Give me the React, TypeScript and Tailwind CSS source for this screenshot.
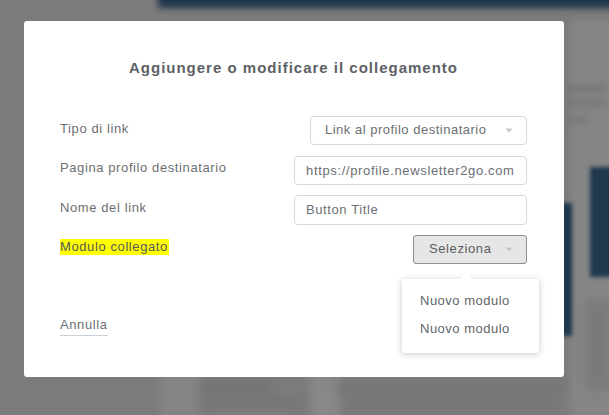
import React from "react";

const font = { fontFamily: '"Liberation Sans", Arial, sans-serif' };

function Caret() {
  return (
    <svg width="8" height="5" viewBox="0 0 8 5" className="shrink-0">
      <path d="M0.5 0.5 L7.5 0.5 L4 4.5 Z" fill="#c3c8cf" />
    </svg>
  );
}

function Background() {
  return (
    <div className="absolute inset-0 overflow-hidden">
      {/* top dark bar */}
      <div className="absolute left-[158px] top-[-10px] w-[470px] h-[18px] bg-[#1e3549] blur-[3px]" />
      {/* right lighter column */}
      <div className="absolute left-[570px] top-[20px] w-[50px] h-[400px] bg-[#858585] blur-[3px]" />
      {/* right dark blocks */}
      <div className="absolute left-[590px] top-[167px] w-[30px] h-[110px] bg-[#1f384c] blur-[2px]" />
      <div className="absolute left-[556px] top-[203px] w-[16px] h-[133px] bg-[#1f384c] blur-[2px]" />
      {/* blurred text on right */}
      <div className="absolute left-[566px] top-[86px] w-[40px] h-[5px] bg-[#727272] blur-[3px]" />
      <div className="absolute left-[566px] top-[100px] w-[40px] h-[5px] bg-[#747474] blur-[3px]" />
      <div className="absolute left-[566px] top-[118px] w-[20px] h-[5px] bg-[#747474] blur-[3px]" />
      <div className="absolute left-[586px] top-[300px] w-[25px] h-[90px] bg-[#7a7a7a] blur-[4px]" />
      {/* bottom area */}
      <div className="absolute left-[160px] top-[370px] w-[40px] h-[50px] bg-[#858585] blur-[4px]" />
      <div className="absolute left-[310px] top-[370px] w-[30px] h-[50px] bg-[#888888] blur-[4px]" />
      <div className="absolute left-[200px] top-[384px] w-[70px] h-[5px] bg-[#6e6e6e] blur-[4px]" />
      <div className="absolute left-[200px] top-[399px] w-[100px] h-[5px] bg-[#707070] blur-[4px]" />
      <div className="absolute left-[335px] top-[386px] w-[225px] h-[5px] bg-[#707070] blur-[4px]" />
      <div className="absolute left-[345px] top-[401px] w-[210px] h-[5px] bg-[#727272] blur-[4px]" />
    </div>
  );
}

export default function App() {
  return (
    <div
      className="relative w-[609px] h-[415px] overflow-hidden bg-[#7b7b7b]"
      style={font}
    >
      <Background />
      <div className="relative pl-[24px] pt-[21px]">
        <div className="relative w-[540px] h-[356px] bg-white rounded-[3px] pl-[36px] pr-[37px] pt-[37px]">
          <div className="h-[20px] flex items-center justify-center text-[15px] font-bold tracking-[1px] text-[#5d6166]">
            Aggiungere o modificare il collegamento
          </div>

          <div className="mt-[38px] flex flex-col text-[13px] tracking-[0.6px] text-[#6b6f74]">
            <div className="flex items-center justify-between h-[29px]">
              <span className="-mt-[3px]">Tipo di link</span>
              <div className="w-[217px] h-[29px] border border-[#d6dbe1] rounded-[4px] flex items-center justify-between pl-[14px] pr-[13px]">
                <span className="-mt-[2px] tracking-[0.5px]">Link al profilo destinatario</span>
                <Caret />
              </div>
            </div>

            <div className="flex items-center justify-between h-[29px] mt-[11px]">
              <span className="-mt-[5px]">Pagina profilo destinatario</span>
              <div className="w-[233px] h-[29px] border border-[#d6dbe1] rounded-[4px] flex items-center pl-[11px] tracking-[0.65px] whitespace-nowrap overflow-hidden">
                https://profile.newsletter2go.com
              </div>
            </div>

            <div className="flex items-center justify-between h-[30px] mt-[10px]">
              <span className="-mt-[5px]">Nome del link</span>
              <div className="w-[233px] h-[30px] border border-[#d6dbe1] rounded-[4px] flex items-center pl-[11px]">
                Button Title
              </div>
            </div>

            <div className="flex items-center justify-between h-[29px] mt-[10px]">
              <span className="-mt-[5px] bg-[#ffff00] text-[#55595e] h-[16px] leading-[16px] pr-[1px]">
                Modulo collegato
              </span>
              <div className="w-[114px] h-[29px] border border-[#8e8e8e] bg-[#e6e6e6] rounded-[3px] flex items-center justify-between pl-[15px] pr-[13px] text-[#5a5e63]">
                <span className="-mt-[2px]">Seleziona</span>
                <Caret />
              </div>
            </div>
          </div>

          <div className="mt-[53px] inline-flex flex-col text-[13px] tracking-[0.6px] text-[#6b6f74]">
            <span className="leading-[16px]">Annulla</span>
            <div className="h-[1px] bg-[#c9d1db] mt-[2px]" />
          </div>

          {/* dropdown */}
          <div className="absolute left-[378px] top-[258px] w-[137px] h-[74px] bg-white rounded-[2px] shadow-[0_1px_7px_rgba(0,0,0,0.22)] flex flex-col pl-[18px] pt-[13px] text-[13px] tracking-[0.5px] text-[#61656a]">
            <div className="absolute left-[58px] top-[-6px] w-0 h-0 border-l-[6px] border-r-[6px] border-b-[6px] border-l-transparent border-r-transparent border-b-white" />
            <span className="h-[18px] leading-[18px]">Nuovo modulo</span>
            <span className="h-[18px] leading-[18px] mt-[10px]">Nuovo modulo</span>
          </div>
        </div>
      </div>
    </div>
  );
}
